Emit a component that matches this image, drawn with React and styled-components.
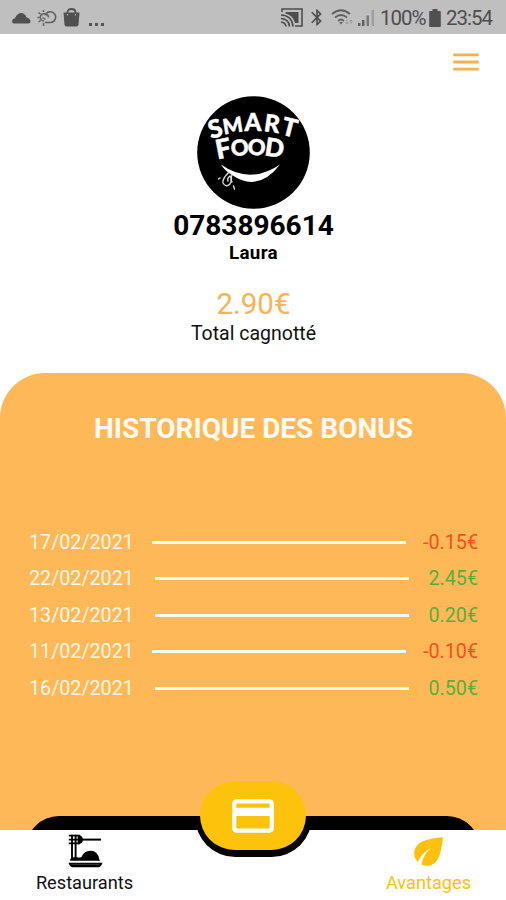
import React from "react";
import styled, { createGlobalStyle } from "styled-components";
import {
  MdMenu,
  MdCreditCard,
  MdEco,
  MdBluetooth,
} from "react-icons/md";

const history = [
  { date: "17/02/2021", amount: -0.15 },
  { date: "22/02/2021", amount: 2.45 },
  { date: "13/02/2021", amount: 0.2 },
  { date: "11/02/2021", amount: -0.1 },
  { date: "16/02/2021", amount: 0.5 },
];

// every letter of the logo is slightly tilted
const logoLetters = [
  { char: "S", x: 20.5, y: 41, rotate: -16, size: 25 },
  { char: "M", x: 37, y: 37, rotate: -9, size: 21 },
  { char: "A", x: 56, y: 34.5, rotate: 0, size: 24 },
  { char: "R", x: 74, y: 36, rotate: 8, size: 24 },
  { char: "T", x: 90.5, y: 40, rotate: 14, size: 25 },
  { char: "F", x: 28, y: 62, rotate: -11, size: 27 },
  { char: "O", x: 43.5, y: 59.5, rotate: -5, size: 22 },
  { char: "O", x: 59.5, y: 59, rotate: 2, size: 22 },
  { char: "D", x: 76.5, y: 60.5, rotate: 8, size: 25 },
];

const Logo = () => (
  <LogoSvg viewBox="0 0 114 114">
    <circle cx="56.5" cy="56.5" r="56.3" fill="#000" />
    {logoLetters.map(({ char, x, y, rotate, size }, i) => (
      <LogoLetter
        key={i}
        x={x}
        y={y}
        fontSize={size}
        transform={`rotate(${rotate} ${x} ${y})`}
      >
        {char}
      </LogoLetter>
    ))}
    <path d="M24 68.500Q53 89 83 68.500Q61 97 35 79Q28 75 24 68.500Z" fill="#fff" />
    <g fill="none" stroke="#ddd" strokeWidth="1.400" strokeLinecap="round">
      <path d="M32 76q-7 7-6 11q3 5 7 1q3-5 0-8q-3 2-2 5" />
      <path d="M35 79q-2 4 0 7M36.500 90l1 3M21.500 83l1.500-1" />
    </g>
  </LogoSvg>
);

const PastaIcon = () => (
  <svg width="35" height="34" viewBox="0 0 35 34" stroke="#000" fill="none">
    <path d="M.8 1.700h11M.8 5.600h11M.8 9.400h11" strokeWidth="1.800" />
    <path
      d="M10.500 1.700q3.600.600 3.600 3.900t-3.600 3.800z"
      fill="#000"
      strokeWidth="1.600"
    />
    <path d="M14 5.600h19" strokeWidth="2" />
    <path d="M4 .8v25M7.600.8v25" strokeWidth="1.900" />
    <path
      d="M2 26.800q0-3 3-3.200q2-1.200 4-.4q2.500.8 4.500-.2q2.500-6.300 9-6.300q7.500 0 8.700 8.600q.6.500.8 1.500z"
      fill="#000"
      stroke="none"
    />
    <path d="M.5 28.700h34q-1.500 4.600-4.500 4.600h-25q-3 0-4.500-4.600z" fill="#000" stroke="none" />
    <path d="M3.500 30.300h28" stroke="#666" strokeWidth=".6" />
  </svg>
);

const App = () => {
  return (
    <Screen>
      <GlobalStyle />
      <StatusBar>
        <Notifications>
          <svg width="19" height="12" viewBox="0 0 19 12">
            <path
              d="M2 11.500q-2 0-2-2.500q.5-2.500 3-2.800q2-5 6-5.200q4 0 5.500 4.500q3.500.5 4 4q0 2-2 2z"
              fill="#505050"
            />
          </svg>
          <svg
            width="20"
            height="18"
            viewBox="0 0 20 18"
            fill="none"
            stroke="#606060"
            strokeWidth="1.500"
          >
            <path d="M9 5.500a3.600 3.600 0 1 0-2 6.500M6.500 14v3M.5 8.500h2M1.500 3.500l2 1.500M1.500 13l2-1.500M6.500 1v2" />
            <path d="M8 13.500h5.500a5.400 5.400 0 1 0-5-8q3 0 3 3M5.500 8.500l3 2" />
          </svg>
          <svg width="17" height="19" viewBox="0 0 17 19">
            <path
              d="M4.500 7V4.500q0-3.500 4-3.500t4 3.500V7"
              fill="none"
              stroke="#505050"
              strokeWidth="1.800"
            />
            <path d="M.5 4.500h16l-1 12q-.2 2-2 2h-10q-1.800 0-2-2z" fill="#505050" />
            <path d="M4.500 6v1.500M12.500 6v1.500" stroke="#bfbfbf" strokeWidth="1" />
          </svg>
          <Dots>
            <i />
            <i />
            <i />
          </Dots>
        </Notifications>
        <System>
          <svg width="22" height="19" viewBox="0 0 22 19" fill="none" stroke="#4d4d4d">
            <path d="M1 4V1h20v17h-7" strokeWidth="1.600" />
            <path d="M4.500 4h13v11h-3.500q-2-8-9.500-9.500z" fill="#4d4d4d" stroke="none" />
            <path
              d="M0 7q11 .5 12 11.500M0 10.500q8 .5 8.500 8M0 14q4.500.5 5 4.500"
              strokeWidth="1.700"
            />
          </svg>
          <BluetoothIcon />
          <svg width="22" height="17" viewBox="0 0 22 17" fill="none" stroke="#606060">
            <path
              d="M1 5q9-7.500 18 0M4 8.500q6-5 12 0M7 12q3-3 6 0"
              strokeWidth="1.700"
            />
            <path d="M8 13h4l-2 2.500z" fill="#606060" stroke="none" />
            <path d="M16 11v4m-1.300-1.500L16 15l1.300-1.500M20 15v-4m-1.300 1.500L20 11l1.300 1.500" stroke="#999" />
          </svg>
          <svg width="17" height="18" viewBox="0 0 17 18" fill="#606060">
            <path d="M0 14h2.500v3H0z" />
            <path d="M4 11h2.500v6H4z" />
            <path d="M8.500 6.500H11V17H8.500z" opacity=".75" />
            <path d="M13.500 1H16v16h-2.500z" opacity=".35" />
          </svg>
          <StatusText $width={44}>100%</StatusText>
          <svg width="12" height="18" viewBox="0 0 12 18">
            <path d="M3.500 0h5v2H11q.8 0 .8.800v14.400q0 .8-.8.800H1q-.8 0-.8-.8V2.800Q.2 2 1 2h2.500z" fill="#505050" />
          </svg>
          <StatusText $width={47}>23:54</StatusText>
        </System>
      </StatusBar>

      <Header>
        <MenuButton aria-label="Menu">
          <MdMenu />
        </MenuButton>
      </Header>

      <Profile>
        <Logo />
        <Phone>0783896614</Phone>
        <Name>Laura</Name>
        <Total>2.90€</Total>
        <TotalLabel>Total cagnotté</TotalLabel>
      </Profile>

      <BonusPanel>
        <Title>HISTORIQUE DES BONUS</Title>
        <List>
          {history.map(({ date, amount }) => (
            <Row key={date}>
              <span>{date}</span>
              <Line />
              <Amount $negative={amount < 0}>{amount.toFixed(2)}€</Amount>
            </Row>
          ))}
        </List>
        <BlackBar />
      </BonusPanel>

      <NavBar>
        <Tab $width={169}>
          <PastaIcon />
          <TabLabel>Restaurants</TabLabel>
        </Tab>
        <Tab $width={155} $active>
          <MdEco />
          <TabLabel>Avantages</TabLabel>
        </Tab>
        <Notch>
          <NotchRing />
        </Notch>
        <CardButton aria-label="Carte">
          <MdCreditCard />
        </CardButton>
      </NavBar>
    </Screen>
  );
};

const GlobalStyle = createGlobalStyle`
  * {
    box-sizing: border-box;
  }
  body {
    margin: 0;
    background: #fff;
    font-family: Roboto, sans-serif;
  }
  svg {
    display: block;
    flex-shrink: 0;
  }
`;
const Screen = styled.div`
  display: flex;
  flex-direction: column;
  width: 506px;
  height: 900px;
  overflow: hidden;
  background: #fff;
`;
const StatusBar = styled.div`
  display: flex;
  justify-content: space-between;
  flex-shrink: 0;
  height: 34px;
  padding: 1px 13px 0 12px;
  background: #bfbfbf;
`;
const Notifications = styled.div`
  display: flex;
  align-items: center;
  gap: 6px;
`;
const Dots = styled.div`
  display: flex;
  gap: 3px;
  margin: 13px 0 0 3px;
  i {
    width: 3px;
    height: 3px;
    background: #555;
  }
`;
const System = styled.div`
  display: flex;
  align-items: center;
  gap: 5px;
`;
const BluetoothIcon = styled(MdBluetooth)`
  width: 20px;
  height: 21px;
  margin: 0 -1px;
  color: #4d4d4d;
`;
const StatusText = styled.span`
  width: ${(props) => props.$width}px;
  font-size: 20.5px;
  letter-spacing: -1px;
  white-space: nowrap;
  color: #4d4d4d;
`;
const Header = styled.header`
  display: flex;
  justify-content: flex-end;
  height: 62px;
  padding: 11px 23px 0 0;
`;
const MenuButton = styled.button`
  width: 34px;
  height: 34px;
  padding: 0;
  border: none;
  background: none;
  color: #f9b04f;
  svg {
    width: 34px;
    height: 34px;
  }
`;
const Profile = styled.section`
  display: flex;
  flex-direction: column;
  align-items: center;
  height: 277px;
  padding-left: 1px;
`;
const LogoSvg = styled.svg`
  width: 114px;
  height: 114px;
`;
const LogoLetter = styled.text`
  font-family: Lato, sans-serif;
  font-weight: 900;
  text-anchor: middle;
  fill: #fff;
  stroke: #fff;
  stroke-width: 0.5px;
  stroke-linejoin: round;
`;
const Phone = styled.p`
  margin: 0;
  font-size: 28px;
  font-weight: 700;
  line-height: 32px;
  color: #000;
`;
const Name = styled.p`
  margin: 0;
  font-size: 18.8px;
  font-weight: 700;
  line-height: 22px;
  letter-spacing: 0.3px;
  color: #000;
`;
const Total = styled.p`
  margin: 22px 0 0;
  font-size: 29.5px;
  line-height: 36px;
  color: #fbb254;
`;
const TotalLabel = styled.p`
  margin: 0;
  font-size: 19.5px;
  line-height: 23px;
  color: #111;
`;
const BonusPanel = styled.main`
  display: flex;
  flex-direction: column;
  align-items: center;
  height: 457px;
  border-radius: 45px 45px 0 0;
  background: #ffb857;
  overflow: hidden;
`;
const Title = styled.h1`
  margin: 39px 0 0;
  padding-left: 1px;
  font-size: 28px;
  font-weight: 700;
  line-height: 34px;
  color: #fffaf2;
`;
const List = styled.div`
  width: 450px;
  margin-top: 78px;
  padding-left: 1px;
`;
const Row = styled.div`
  display: flex;
  align-items: center;
  justify-content: space-between;
  height: 36.5px;
  font-size: 19.7px;
  color: #fff7e6;
`;
const Line = styled.div`
  width: 254px;
  height: 3px;
  margin: 0 -1px 0 1px;
  background: #fffaf0;
`;
const Amount = styled.span`
  color: ${(props) => (props.$negative ? "#f4511e" : "#5aae3c")};
`;
const BlackBar = styled.div`
  flex-shrink: 0;
  width: 454px;
  height: 66px;
  margin-top: 109px;
  border-radius: 33px;
  background: #000;
`;
const NavBar = styled.nav`
  position: relative;
  display: flex;
  justify-content: space-between;
  height: 70px;
  background: #fff;
`;
const Tab = styled.div`
  display: flex;
  flex-direction: column;
  align-items: center;
  justify-content: flex-end;
  width: ${(props) => props.$width}px;
  padding-bottom: 6px;
  color: ${(props) => (props.$active ? "#fdc00f" : "#111")};
  svg {
    width: ${(props) => (props.$active ? "43px" : "35px")};
    height: ${(props) => (props.$active ? "43px" : "34px")};
    margin: ${(props) => (props.$active ? "0 0 -1px" : "0 0 4px 2px")};
  }
`;
const TabLabel = styled.span`
  font-size: 18.2px;
  line-height: 22px;
`;
// only the lower part of the ring is visible, from the black bar down
const Notch = styled.div`
  position: absolute;
  top: -14px;
  left: 195px;
  width: 117px;
  height: 42px;
  overflow: hidden;
`;
const NotchRing = styled.div`
  height: 81px;
  margin-top: -40px;
  border-radius: 41px;
  background: #000;
`;
const CardButton = styled.button`
  position: absolute;
  top: -49px;
  left: 200.4px;
  display: flex;
  align-items: center;
  justify-content: center;
  width: 106px;
  height: 69px;
  padding: 0;
  border: none;
  border-radius: 35px;
  background: #fdc20c;
  color: #fff;
  svg {
    width: 50px;
    height: 50px;
  }
`;

export default App;
